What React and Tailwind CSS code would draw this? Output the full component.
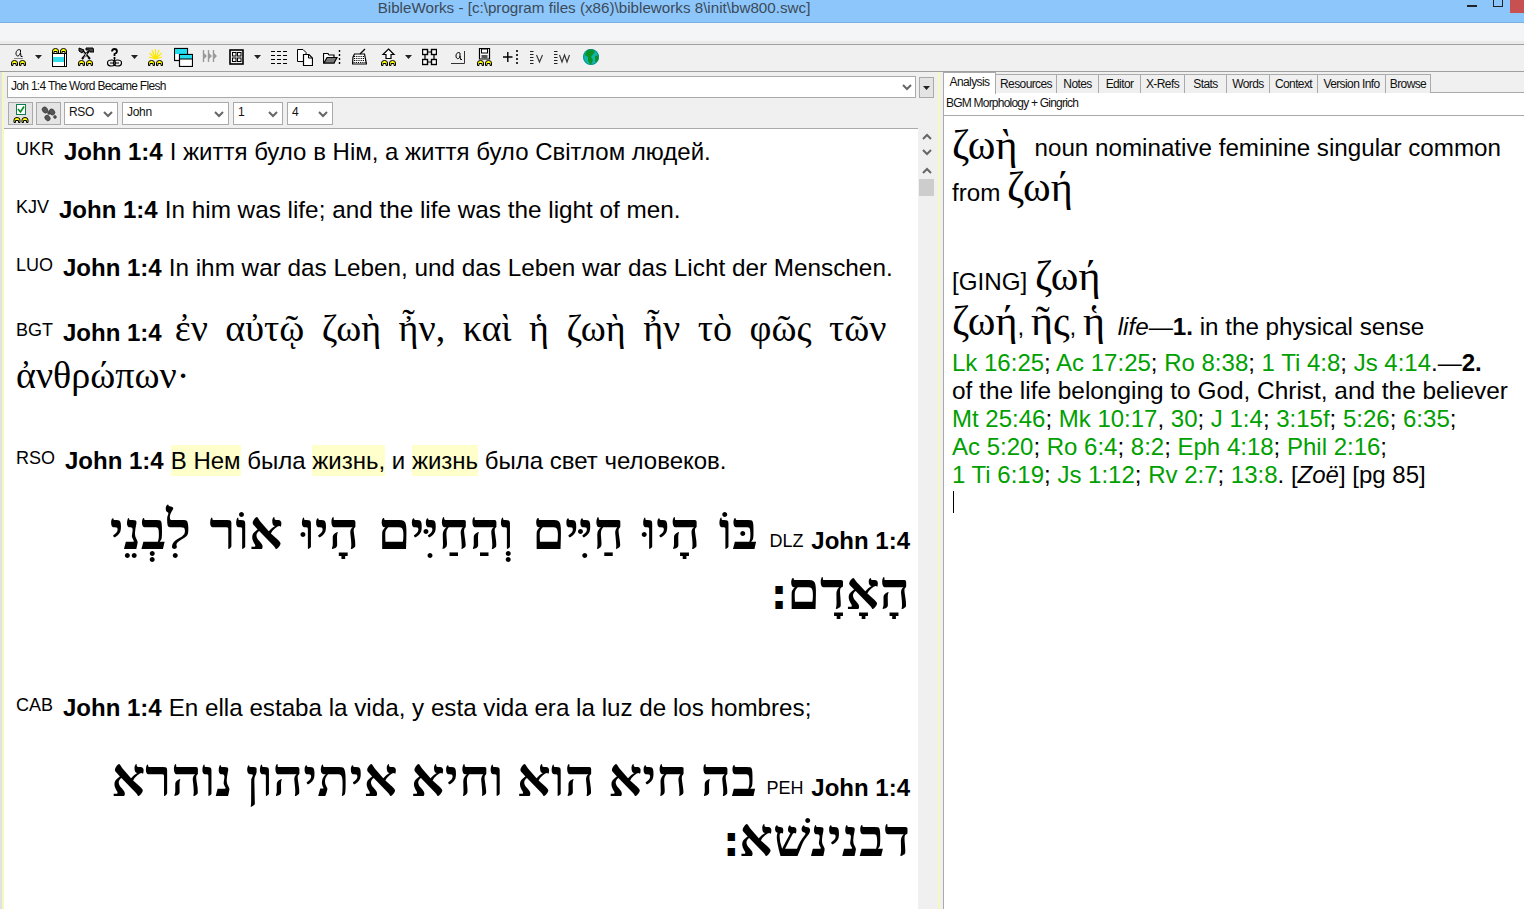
import React from "react";

const Books = ({ x = 0, y = 13 }) => (
  <g transform={`translate(${x} ${y})`} stroke="#000" strokeWidth="1" fill="#ffff00">
    <path d="M0.5 5.5V3Q0.5 0.5 3.5 0.5T6.5 3V5.5H5V3.5H2V5.5Z" />
    <path d="M8.5 5.5V3Q8.5 0.5 11.5 0.5T14.5 3V5.5H13V3.5H10V5.5Z" />
  </g>
);
const Svg = ({ children, w = 15, cls = "" }) => (
  <svg width={w} height="20" viewBox={`0 0 ${w} 20`} className={`shrink-0 ${cls}`} fill="none" stroke="#000" strokeWidth="1">
    {children}
  </svg>
);
const Arrow = ({ cls = "" }) => (
  <svg width="7" height="4" viewBox="0 0 7 4" className={`shrink-0 ${cls}`}><path d="M0 0H7L3.5 4Z" fill="#222" /></svg>
);
const Chevron = ({ cls = "" }) => (
  <svg width="10" height="7" viewBox="0 0 10 7" className={cls} fill="none" stroke="#666" strokeWidth="2"><path d="M1 1L5 5L9 1" /></svg>
);

const Select = ({ w, children }) => (
  <div className={`${w} h-[23px] shrink-0 bg-white border border-[#aaa] flex items-center justify-between pl-[4px] pr-[4px] text-[12px] tracking-[-0.3px] text-[#111] leading-none pb-[3px]`}>
    <span>{children}</span>
    <Chevron cls="mt-[5px]" />
  </div>
);

const Tab = ({ children, w, active }) => (
  <div className={`${w} shrink-0 whitespace-nowrap border-r border-t border-[#aaa] flex items-center justify-center text-[12px] tracking-[-0.6px] text-[#111] ${active ? "h-[22px] bg-white -mt-[2px] border-l pb-[4px] relative" : "h-[19px] bg-[#f0f0f0]"}`}>
    {children}
  </div>
);

const Label = ({ children }) => <span className="text-[18px] relative -top-[5px] mr-[10px]">{children}</span>;
const Ref = () => <b className="font-bold text-[24px] mr-[7px]">John 1:4</b>;
const Hl = ({ children }) => <span className="bg-[#ffffcc] py-[2px]">{children}</span>;

const Verse = ({ label, children, cls = "" }) => (
  <div className={`whitespace-nowrap h-[28px] ${cls}`}>
    <Label>{label}</Label>
    <Ref />
    {children}
  </div>
);

const G = ({ children, cls = "" }) => <span className={`font-['Liberation_Serif',serif] ${cls}`}>{children}</span>;
const L = ({ children }) => <span className="text-[#00a000]">{children}</span>;
const Sof = () => <span className="font-['DejaVu_Sans',sans-serif] font-bold text-[42px]">׃</span>;

export default function App() {
  return (
    <div className="w-[1524px] h-[909px] overflow-hidden flex flex-col bg-white font-['Liberation_Sans',Arial,sans-serif] text-black">
      {/* title bar */}
      <div className="h-[23px] shrink-0 bg-[#8cc6fb] border-b border-[#7ab0e0] relative flex justify-center">
        <span className="text-[15.2px] leading-[16px] text-[#3c4a58] mr-[336px]">BibleWorks - [c:\program files (x86)\bibleworks 8\init\bw800.swc]</span>
        <div className="absolute right-[47px] top-[5px] w-[10px] h-[2px] bg-[#222]" />
        <div className="absolute right-[21px] -top-[1px] w-[10px] h-[8px] border border-[#222]" />
        <div className="absolute right-0 top-0 w-[14px] h-[13px] bg-[#c75050]" />
      </div>
      {/* menu band */}
      <div className="h-[21px] shrink-0 bg-[#f4f5f7] border-b-[3px] border-[#ebebeb]" />
      {/* toolbar */}
      <div className="h-[28px] shrink-0 bg-[#f0f0f0] border-y border-[#a0a0a0] flex items-center pl-[11px] pb-[2px]">
        <Svg><path d="M9.5 3C8 2 5 3 5 6.5S8.5 10 9.5 5.5L10 9.5H11.5M9.5 3V5" /><path d="M3 11.5H12" stroke="#888" /><Books /></Svg>
        <Arrow cls="ml-[9px]" />
        <Svg cls="ml-[10px]"><Books y={1} /><rect x="0.5" y="6.5" width="14" height="13" fill="#fff" /><rect x="1" y="10" width="11" height="5" fill="#33ddee" stroke="none" /><path d="M12.5 7V19" /></Svg>
        <Svg w={16} cls="ml-[11px]"><path d="M4 3L12 12M11 4L4 12" strokeWidth="2" /><path d="M8 1H15L16 5L12 5L11 3H8Z" fill="#444" /><path d="M1 1L6 3L4 6L1 4Z" fill="#444" /><path d="M5 5L10 11M9 6L6 11" stroke="#aaa" /><Books y={13} /></Svg>
        <Svg cls="ml-[13px]"><path d="M5 4.5Q5 2 7.5 2T10 4.5Q10 6 7.5 7V9" strokeWidth="1.8" /><path d="M7.5 10V12" strokeWidth="1.8" /><path d="M7.5 11V14" /><ellipse cx="4.5" cy="16" rx="4" ry="3" strokeWidth="1.2" /><ellipse cx="10.5" cy="16" rx="4" ry="3" strokeWidth="1.2" /><path d="M3 16H12" /></Svg>
        <Arrow cls="ml-[9px]" />
        <Svg cls="ml-[10px]"><path d="M7.5 12V2M7.5 12L4 3M7.5 12L11 3M7.5 12L1.5 6M7.5 12L13.5 6M7.5 12L1 10M7.5 12L14 10" stroke="#ffe800" strokeWidth="1.2" /><Books /></Svg>
        <Svg w={19} cls="ml-[11px]"><rect x="0.5" y="1.5" width="13" height="12" fill="#fff" strokeWidth="1.2" /><rect x="1" y="2" width="12" height="5" fill="#22ddee" stroke="none" /><rect x="5.5" y="7.5" width="13" height="12" fill="#fff" strokeWidth="1.2" /><rect x="6" y="8" width="12" height="4" fill="#22ddee" stroke="none" /><path d="M5.5 12H18.5" /></Svg>
        <Svg w={16} cls="ml-[9px]"><path d="M1.5 3V15M6.5 3V15M11.5 3V15" stroke="#999" strokeWidth="1.4" /><path d="M2 6L5 9L2 12ZM7 6L10 9L7 12ZM12 6L15 9L12 12Z" fill="#999" stroke="none" /></Svg>
        <Svg cls="ml-[11px]"><rect x="1" y="3" width="13" height="14" strokeWidth="1.6" /><rect x="3.5" y="5.5" width="3.5" height="3.5" /><rect x="8.5" y="5.5" width="3.5" height="3.5" /><rect x="3.5" y="11" width="3.5" height="3.5" /><rect x="8.5" y="11" width="3.5" height="3.5" /></Svg>
        <Arrow cls="ml-[10px]" />
        <Svg w={16} cls="ml-[10px]"><path d="M0 4.5H4M6 4.5H10M12 4.5H16M0 8.5H4M6 8.5H10M12 8.5H16M0 12.5H4M6 12.5H10M12 12.5H16M0 16.5H4M6 16.5H10M12 16.5H16" strokeWidth="1" /></Svg>
        <Svg w={16} cls="ml-[10px]"><path d="M0.5 2.5H6L9 5.5V14.5H0.5Z" fill="#fff" /><path d="M6.5 7.5H12L15.5 11V18.5H6.5Z" fill="#fff" strokeWidth="1.2" /><path d="M11.5 7.5V11H15" /></Svg>
        <Svg w={18} cls="ml-[10px]"><path d="M0.5 6.5H5L6 8H11V16H0.5Z" fill="#fff" strokeWidth="1.2" /><path d="M1 16L4 10.5H14L11 16Z" fill="#777" strokeWidth="1.2" /><path d="M16.5 3V18" strokeDasharray="2 2" strokeWidth="1.4" /></Svg>
        <Svg cls="ml-[11px]"><path d="M1 10L2.5 7H12.5L14.5 17H0.5Z" fill="#fff" strokeWidth="1.2" /><path d="M2 9.5H13M2 11.5H13.5M2 13.5H14M1.5 15.5H14" strokeDasharray="1.2 1" /><path d="M8 7L13 2" strokeWidth="1.2" /></Svg>
        <Svg cls="ml-[14px]"><path d="M7.5 2L13 7.5H10V11.5H5V7.5H2Z" fill="#fff" strokeWidth="1.2" /><Books /></Svg>
        <Arrow cls="ml-[9px]" />
        <Svg cls="ml-[10px]"><rect x="0.5" y="2.5" width="5" height="5" fill="#fff" strokeWidth="1.4" /><rect x="9.5" y="2.5" width="5" height="5" fill="#fff" strokeWidth="1.4" /><rect x="0.5" y="12.5" width="5" height="5" fill="#fff" strokeWidth="1.4" /><rect x="9.5" y="12.5" width="5" height="5" fill="#fff" strokeWidth="1.4" /><path d="M5 5H10M3 8V13M12 8V13M5 15H10" strokeWidth="1.2" /></Svg>
        <Svg cls="ml-[14px]"><path d="M9 6C8 5 5 5.5 5 9S8.5 12.5 9 9L9.5 12.5H11M9 6V9" /><path d="M0 16.5H13.5V4" stroke="#333" /></Svg>
        <Svg w={15} cls="ml-[11px]"><path d="M2.5 1.5H12.5V12H2.5Z" fill="#fff" strokeWidth="1.2" /><rect x="4.5" y="2" width="6" height="4" fill="#fff" /><rect x="4.5" y="8" width="6" height="3.5" fill="#555" stroke="none" /><Books /></Svg>
        <Svg w={10} cls="ml-[11px]"><path d="M0 10H9.5M4.8 5V15" strokeWidth="1.4" /></Svg>
        <Svg w={2} cls="ml-[3px]"><path d="M1 3V18" strokeDasharray="2 2" strokeWidth="1.6" /></Svg>
        <Svg w={13} cls="ml-[12px]"><path d="M0 4.5H3.5M0 7.5H3.5M0 10.5H3.5M0 13.5H3.5M0 16.5H3.5" stroke="#222" /><path d="M6.5 8L9.5 15L12.5 8" stroke="#333" strokeWidth="1.1" /></Svg>
        <Svg w={17} cls="ml-[11px]"><path d="M0 4.5H3.5M0 7.5H3.5M0 10.5H3.5M0 13.5H3.5M0 16.5H3.5" stroke="#222" /><path d="M5.5 8L8 15L10.5 8L13 15L15.5 8" stroke="#333" strokeWidth="1.1" /></Svg>
        <Svg w={16} cls="ml-[12px]"><circle cx="8" cy="10" r="8" fill="#12b4ac" stroke="none" /><path d="M4 3L9 2L12 5L8 10L10 13L8 18L5 14L5 10L2 8Z" fill="#0a9424" stroke="none" /><path d="M12 9L16 8L15 14L12 15Z" fill="#0a9424" stroke="none" /><circle cx="8" cy="10" r="7.5" stroke="#0d8a80" strokeWidth="0.8" /></Svg>
      </div>

      {/* body */}
      <div className="flex-1 min-h-0 flex bg-[#f0f0f0]">
        <div className="w-[2px] shrink-0 bg-[#e2e2e2]" />
        <div className="w-[2px] shrink-0 bg-[#f7f7c0]" />
        {/* left pane */}
        <div className="w-[934px] shrink-0 flex flex-col">
          <div className="flex items-center h-[22px] shrink-0 mt-[4px] pl-[3px]">
            <div className="w-[909px] h-[22px] bg-white border border-[#aaa] flex items-center justify-between pl-[3px] pr-[3px] text-[12px] tracking-[-0.7px] text-[#111] pb-[3px]">
              <span>Joh 1:4 The Word Became Flesh</span>
              <Chevron cls="mt-[4px]" />
            </div>
            <div className="ml-[3px] w-[15px] h-[21px] mt-[1px] bg-[#e4e4e4] border border-[#aaa] flex items-center justify-center"><Arrow /></div>
          </div>
          <div className="flex h-[23px] items-center shrink-0 mt-[4px] pl-[4px]">
            <div className="w-[25px] h-[23px] bg-[#e4e4e4] border border-[#aaa] flex items-center justify-center">
              <svg width="16" height="19" viewBox="0 0 16 19" fill="none" stroke="#000"><rect x="3.5" y="0.5" width="9" height="10" fill="#fff" stroke="#0a7a50" /><path d="M5 5L7.5 8L11 2.5" stroke="#0a8a20" strokeWidth="1.6" /><Books x="0.5" y={13} /></svg>
            </div>
            <div className="w-[25px] h-[23px] ml-[3px] bg-[#e4e4e4] border border-[#aaa] flex items-center justify-center">
              <svg width="18" height="18" viewBox="0 0 18 18" fill="#555" stroke="#333" strokeWidth="0.6"><ellipse cx="5" cy="5" rx="2.6" ry="3.2" transform="rotate(-40 5 5)" /><circle cx="9" cy="8" r="1.4" /><ellipse cx="12" cy="7" rx="2.6" ry="3.2" transform="rotate(-40 12 7)" /><ellipse cx="7.5" cy="13" rx="2.4" ry="3" transform="rotate(-40 7.5 13)" /><circle cx="15" cy="12" r="1.4" /></svg>
            </div>
            <Select w="w-[54px] ml-[3px]">RSO</Select>
            <Select w="w-[107px] ml-[4px]">John</Select>
            <Select w="w-[50px] ml-[4px]">1</Select>
            <Select w="w-[46px] ml-[4px]">4</Select>
          </div>
          <div className="flex-1 min-h-0 flex mt-[3px]">
            <div className="w-[914px] shrink-0 bg-white border-t border-[#aaa] pl-[12px] pt-[9px] text-[24.3px] leading-[28px] overflow-hidden">
              <Verse label="UKR" cls="text-[24px]">I життя було в Нім, а життя було Світлом людей.</Verse>
              <Verse label="KJV" cls="mt-[30px]">In him was life; and the life was the light of men.</Verse>
              <Verse label="LUO" cls="mt-[30px]">In ihm war das Leben, und das Leben war das Licht der Menschen.</Verse>
              <div className="mt-[26px] leading-[40px]">
                <Label>BGT</Label>
                <Ref />
                <G cls="text-[38px] [word-spacing:8px] ml-[6px]">ἐν αὐτῷ ζωὴ ἦν, καὶ ἡ ζωὴ ἦν τὸ φῶς τῶν ἀνθρώπων·</G>
              </div>
              <Verse label="RSO" cls="mt-[47px] text-[24px]">
                <Hl>В Нем</Hl> была <Hl>жизнь,</Hl> и <Hl>жизнь</Hl> была свет человеков.
              </Verse>
              <div dir="rtl" className="mt-[32px] leading-[48px] pr-[8px] pl-[90px]">
                <bdi className="font-bold text-[24px]">John 1:4</bdi>{" "}
                <bdi className="text-[18px] relative -top-[2px] mx-[1px] ml-[5px]">DLZ</bdi>{" "}
                <span className="font-['Liberation_Serif',serif] font-bold text-[53px] [word-spacing:5px]">בּוֹ הָיוּ חַיִּים וְהַחַיִּים הָיוּ אוֹר לִבְנֵי הָאָדָם<Sof /></span>
              </div>
              <Verse label="CAB" cls="mt-[69px] text-[24.2px]">En ella estaba la vida, y esta vida era la luz de los hombres;</Verse>
              <div dir="rtl" className="mt-[32px] leading-[48px] pr-[8px] pl-[90px]">
                <bdi className="font-bold text-[24px]">John 1:4</bdi>{" "}
                <bdi className="text-[18px] relative -top-[2px] mx-[1px] ml-[3px]">PEH</bdi>{" "}
                <span className="font-['Liberation_Serif',serif] font-bold text-[53px]">בה חיא הוא וחיא איתיהון נוהרא דבנינשׁא<Sof /></span>
              </div>
            </div>
            {/* scrollbar */}
            <div className="w-[15px] shrink-0 ml-[1px] flex flex-col items-center">
              <svg width="10" height="7" viewBox="0 0 10 7" className="mt-[5px]" fill="none" stroke="#666" strokeWidth="2"><path d="M1 6L5 2L9 6" /></svg>
              <svg width="10" height="7" viewBox="0 0 10 7" className="mt-[9px]" fill="none" stroke="#666" strokeWidth="2"><path d="M1 1L5 5L9 1" /></svg>
              <svg width="10" height="7" viewBox="0 0 10 7" className="mt-[11px]" fill="none" stroke="#666" strokeWidth="2"><path d="M1 6L5 2L9 6" /></svg>
              <div className="w-[15px] h-[17px] bg-[#cdcdcd] mt-[5px]" />
            </div>
          </div>
        </div>
        <div className="w-[2px] shrink-0 bg-[#f7f7c0]" />
        <div className="w-[3px] shrink-0" />
        {/* right pane */}
        <div className="flex-1 min-w-0 flex flex-col">
          <div className="flex h-[19px] shrink-0 mt-[2px] border-b border-[#aaa] relative">
            <Tab w="w-[53px]" active>Analysis</Tab>
            <Tab w="w-[61px]">Resources</Tab>
            <Tab w="w-[42px]">Notes</Tab>
            <Tab w="w-[42px]">Editor</Tab>
            <Tab w="w-[44px]">X-Refs</Tab>
            <Tab w="w-[42px]">Stats</Tab>
            <Tab w="w-[43px]">Words</Tab>
            <Tab w="w-[48px]">Context</Tab>
            <Tab w="w-[68px]">Version Info</Tab>
            <Tab w="w-[45px]">Browse</Tab>
          </div>
          <div className="h-[23px] shrink-0 bg-white border-l border-b border-[#aaa] text-[12px] tracking-[-0.78px] pl-[2px] pt-[1px] text-[#111]">BGM Morphology + Gingrich</div>
          <div className="flex-1 min-h-0 bg-white border-l border-[#aaa] pl-[8px] text-[24.2px] whitespace-nowrap overflow-hidden">
            <div className="h-[44px] leading-[48px] mt-[5px]"><G cls="text-[42px] mr-[17px]">ζωὴ</G><span className="relative -top-[3px]">noun nominative feminine singular common</span></div>
            <div className="h-[44px] leading-[44px]">from <G cls="text-[42px]">ζωή</G></div>
            <div className="h-[44px] leading-[44px] mt-[45px]"><span className="mr-[1px]">[GING]</span> <G cls="text-[42px]">ζωή</G></div>
            <div className="h-[44px] leading-[46px]"><G cls="text-[42px]">ζωή</G>, <G cls="text-[42px]">ῆς</G>, <G cls="text-[42px]">ἡ</G> <i className="ml-[6px]">life</i>—<b>1.</b> in the physical sense</div>
            <div className="leading-[28px] mt-[7px] text-[24px]">
              <div><L>Lk 16:25</L>; <L>Ac 17:25</L>; <L>Ro 8:38</L>; <L>1 Ti 4:8</L>; <L>Js 4:14</L>.—<b>2.</b></div>
              <div className="text-[24.4px]">of the life belonging to God, Christ, and the believer</div>
              <div><L>Mt 25:46</L>; <L>Mk 10:17</L>, <L>30</L>; <L>J 1:4</L>; <L>3:15f</L>; <L>5:26</L>; <L>6:35</L>;</div>
              <div><L>Ac 5:20</L>; <L>Ro 6:4</L>; <L>8:2</L>; <L>Eph 4:18</L>; <L>Phil 2:16</L>;</div>
              <div><L>1 Ti 6:19</L>; <L>Js 1:12</L>; <L>Rv 2:7</L>; <L>13:8</L>. [<i>Zoë</i>] [pg 85]</div>
            </div>
            <div className="w-[1px] h-[22px] bg-black mt-[2px] ml-[1px]" />
          </div>
        </div>
      </div>
    </div>
  );
}
